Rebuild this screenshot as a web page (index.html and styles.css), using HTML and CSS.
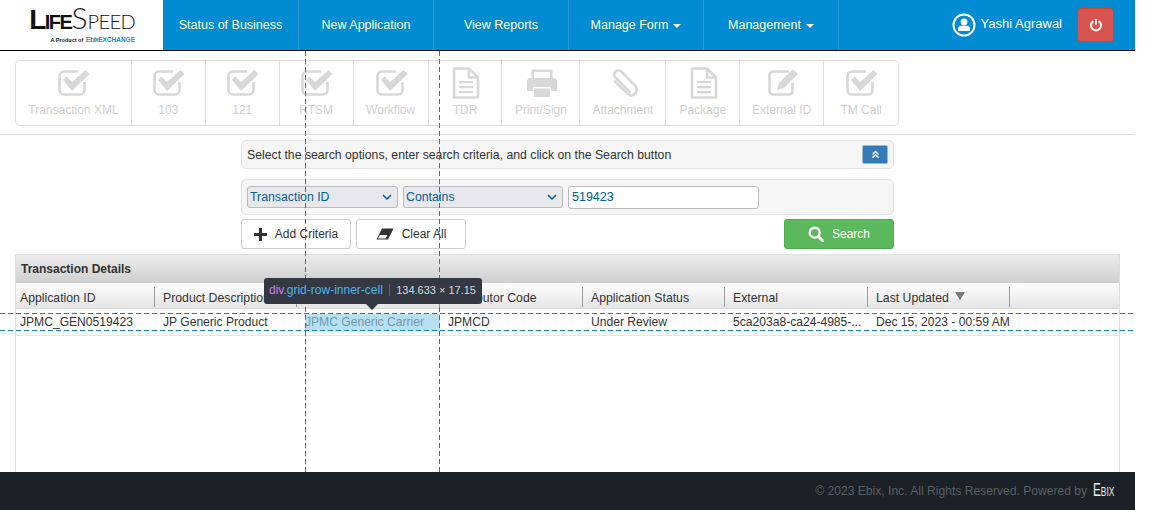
FILE: index.html
```html
<!DOCTYPE html>
<html lang="en">

<head>
    <meta charset="UTF-8">
    <title>LifeSpeed</title>
    <link rel="stylesheet" href="styles.css">
</head>

<body>
    <div class="page">
        <header class="topbar">
            <a class="logo">
                <span class="logo-name"><b class="cap">L</b><b class="rest">IFE</b><span class="cap">S</span><span class="rest">PEED</span></span>
                <span class="logo-sub">A Product of <i>Ebix</i><em>EXCHANGE</em></span>
            </a>
            <ul class="nav">
                <li class="first">Status of Business</li>
                <li>New Application</li>
                <li>View Reports</li>
                <li>Manage Form <span class="caret"></span></li>
                <li>Management <span class="caret"></span></li>
            </ul>
            <div class="user">
                <svg class="user-icon" width="24" height="24" viewBox="0 0 24 24">
                    <circle cx="12" cy="12" r="10.500" fill="none" stroke="#fff" stroke-width="2"></circle>
                    <circle cx="12" cy="9" r="3.400" fill="#fff"></circle>
                    <path d="M6 18v-2.200c0-1.800 1.400-3 3-3h6c1.600 0 3 1.200 3 3V18z" fill="#fff"></path>
                </svg>
                <span class="user-name">Yashi Agrawal</span>
                <button class="power">
                    <svg width="14" height="14" viewBox="0 0 14 14">
                        <path d="M4.300 3.200a5 5 0 1 0 5.400 0" fill="none" stroke="#fff" stroke-width="2"></path>
                        <path d="M7 1v5.500" stroke="#fff" stroke-width="2"></path>
                    </svg>
                </button>
            </div>
        </header>

        <div class="toolbar-wrap">
            <ul class="toolbar">
                <li class="w116"><svg class="ic"><use href="#check"></use></svg>Transaction XML</li>
                <li class="w74"><svg class="ic"><use href="#check"></use></svg>103</li>
                <li class="w74"><svg class="ic"><use href="#check"></use></svg>121</li>
                <li class="w74"><svg class="ic"><use href="#check"></use></svg>RTSM</li>
                <li class="w75"><svg class="ic"><use href="#check"></use></svg>Workflow</li>
                <li class="w74"><svg class="ic"><use href="#doc"></use></svg>TDR</li>
                <li class="w78"><svg class="ic"><use href="#printer"></use></svg>Print/Sign</li>
                <li class="w86"><svg class="ic"><use href="#clip"></use></svg>Attachment</li>
                <li class="w74"><svg class="ic"><use href="#doc"></use></svg>Package</li>
                <li class="w84"><svg class="ic"><use href="#edit"></use></svg>External ID</li>
                <li class="w74"><svg class="ic"><use href="#check"></use></svg>TM Call</li>
            </ul>
        </div>

        <section class="search">
            <div class="well hint">
                <span class="hint-text">Select the search options, enter search criteria, and click on the Search button</span>
                <button class="collapse">
                    <svg width="9" height="9" viewBox="0 0 10 10">
                        <path d="M1.500 5 5 1.800 8.500 5M1.500 8.600 5 5.400l3.500 3.200" fill="none" stroke="#dfe9f3" stroke-width="1.700"></path>
                    </svg>
                </button>
            </div>
            <div class="well criteria">
                <div class="select s-field">Transaction ID<svg class="chev" width="10" height="6" viewBox="0 0 10 6"><path d="M1 1l4 4 4-4" fill="none" stroke="#00629b" stroke-width="1.500"></path></svg></div>
                <div class="select s-op">Contains<svg class="chev" width="10" height="6" viewBox="0 0 10 6"><path d="M1 1l4 4 4-4" fill="none" stroke="#00629b" stroke-width="1.500"></path></svg></div>
                <div class="input">519423</div>
            </div>
            <div class="actions">
                <button class="btn add">
                    <svg width="13" height="13" viewBox="0 0 13 13"><path d="M5 0h3v5h5v3H8v5H5V8H0V5h5z" fill="#333"></path></svg>
                    Add Criteria
                </button>
                <button class="btn clear">
                    <svg width="18" height="12" viewBox="0 0 18 12">
                        <path d="M6 .5h11.500L12 11.500H.5z" fill="#333"></path>
                        <path d="M3.800 7h7.700l-2 3.500H2z" fill="#fff"></path>
                    </svg>
                    Clear All
                </button>
                <button class="btn go">
                    <svg width="16" height="16" viewBox="0 0 16 16">
                        <circle cx="6.700" cy="6.700" r="5" fill="none" stroke="#fff" stroke-width="2.400"></circle>
                        <path d="M10.500 10.500l4.200 4.200" stroke="#fff" stroke-width="2.800" stroke-linecap="round"></path>
                    </svg>
                    Search
                </button>
            </div>
        </section>

        <section class="details">
            <div class="details-title">Transaction Details</div>
            <div class="grid-head">
                <div class="col c1">Application ID</div>
                <div class="col c2">Product Description</div>
                <div class="col c3">Carrier</div>
                <div class="col c4">Distributor Code</div>
                <div class="col c5">Application Status</div>
                <div class="col c6">External</div>
                <div class="col c7">Last Updated <span class="sort"></span></div>
            </div>
            <div class="grid-row">
                <div class="cell c1">JPMC_GEN0519423</div>
                <div class="cell c2">JP Generic Product</div>
                <div class="cell c3"><span class="picked">JPMC Generic Carrier</span></div>
                <div class="cell c4">JPMCD</div>
                <div class="cell c5">Under Review</div>
                <div class="cell c6">5ca203a8-ca24-4985-...</div>
                <div class="cell c7">Dec 15, 2023 - 00:59 AM</div>
            </div>
        </section>

        <footer class="footer">
            <span class="copy">© 2023 Ebix, Inc. All Rights Reserved. Powered by</span>
            <span class="ebix">E<small>BIX</small></span>
        </footer>

        <!-- devtools inspect overlay -->
        <div class="guide v v1"></div>
        <div class="guide v v2"></div>
        <div class="guide h h1"></div>
        <div class="guide h h2"></div>
        <div class="tip">
            <span class="tip-tag">div</span><span class="tip-class">.grid-row-inner-cell</span>
            <span class="tip-size">134.633 × 17.15</span>
        </div>
    </div>

    <svg class="defs" width="0" height="0">
        <symbol id="check" viewBox="0 0 32 32">
            <path d="M20 4.500H6c-2.500 0-4.500 2-4.500 4.500v14c0 2.500 2 4.500 4.500 4.500h16c2.500 0 4.500-2 4.500-4.500v-8" fill="none" stroke="#d8d8d8" stroke-width="2.600"></path>
            <path d="M5 13l3.500-3.500 5.500 5.500L27.500 3l4 4-17.500 17z" fill="#d8d8d8"></path>
        </symbol>
        <symbol id="doc" viewBox="0 0 32 32">
            <path d="M4 1.500h15l9 9v20H4zM19 1.500v9h9" fill="none" stroke="#d8d8d8" stroke-width="2.600" stroke-linejoin="round"></path>
            <path d="M9 14h14v2.200H9zM9 19h14v2.200H9zM9 24h14v2.200H9z" fill="#d8d8d8"></path>
        </symbol>
        <symbol id="printer" viewBox="0 0 32 32">
            <path d="M5.500 12V2.500h21V12H24V5H8v7z" fill="#d8d8d8"></path>
            <path d="M4 11h24c1.500 0 3 1.500 3 3v10h-6v-4H7v4H1V14c0-1.500 1.500-3 3-3z" fill="#d8d8d8"></path>
            <path d="M8 21.500h16V30H8z" fill="#d8d8d8"></path>
        </symbol>
        <symbol id="clip" viewBox="0 0 32 32">
            <path d="M22 25 7.500 10.500c-2-2-1.500-4.500 0-6s4-1.800 6 .2l14 14.500c3 3 .5 9-4 9.300-1.500 0-3-.8-4-1.800L7 14.500" fill="none" stroke="#d8d8d8" stroke-width="2.600" stroke-linecap="round"></path>
        </symbol>
        <symbol id="edit" viewBox="0 0 32 32">
            <path d="M22 4.500H6.500C4 4.500 2.500 6 2.500 8.500v15c0 2.500 1.500 4 4 4h15c2.500 0 4-1.500 4-4v-8" fill="none" stroke="#d8d8d8" stroke-width="2.600"></path>
            <path d="M26 2l5 5-14 14-7 2 2-7z" fill="#d8d8d8"></path>
        </symbol>
    </svg>
</body>

</html>
```

FILE: styles.css
```css
* {
    box-sizing: border-box;
}

body,
ul,
li {
    margin: 0;
    padding: 0;
}

ul {
    list-style-type: none;
}

body {
    background: #fff;
    color: #333;
    font: 12px/17px "Liberation Sans", Arial, sans-serif;
}

button {
    font: inherit;
    cursor: pointer;
}

.page {
    position: relative;
    display: flex;
    flex-direction: column;
    width: 1135px;
    height: 510px;
    overflow: hidden;
}

.defs {
    position: absolute;
}

/* top bar */
.topbar {
    display: flex;
    flex: none;
    height: 51px;
    background: #008bd3;
    border-bottom: 1px solid #000;
}

.logo {
    display: flex;
    flex: none;
    flex-direction: column;
    align-items: flex-end;
    width: 163px;
    padding: 1px 28px 0 0;
    background: #fff;
}

.logo-name {
    color: #111;
    font-family: Lato, "Liberation Sans", sans-serif;
    line-height: 32px;
    white-space: nowrap;
}

.logo-name b {
    font-family: "Liberation Sans", sans-serif;
    font-weight: 700;
}

.logo-name .cap {
    font-size: 30px;
}

.logo-name b.cap {
    font-size: 28px;
    letter-spacing: -1.500px;
}

.logo-name b.rest {
    font-size: 20px;
    letter-spacing: -1.500px;
}

.logo-name span.cap {
    font-weight: 300;
}

.logo-name span.rest {
    font-size: 20px;
    font-weight: 300;
    letter-spacing: -.6px;
}

.logo-sub {
    margin-top: -6px;
    color: #222;
    font-size: 5.500px;
    font-weight: 700;
    line-height: 10px;
    white-space: nowrap;
}

.logo-sub i {
    margin-left: 1px;
    color: #0b5d8c;
    font-size: 8px;
    font-style: normal;
    font-weight: 400;
    letter-spacing: -.8px;
}

.logo-sub em {
    color: #1c8cc8;
    font-size: 6.500px;
    font-style: normal;
}

.nav {
    display: flex;
    color: #ffffc8;
    font-size: 12.500px;
}

.nav li {
    display: flex;
    gap: 5px;
    align-items: center;
    justify-content: center;
    width: 135px;
    border-right: 1px solid #2a9bd8;
}

.nav .first {
    width: 136px;
}

.nav .caret {
    width: 0;
    height: 0;
    margin-top: 2px;
    border-top: 4px solid #ffffc8;
    border-right: 4px solid transparent;
    border-left: 4px solid transparent;
}

.user {
    display: flex;
    flex: 1;
    align-items: center;
    justify-content: flex-end;
    padding-right: 21px;
    color: #fff;
}

.user-icon {
    margin-right: 5px;
}

.user-name {
    margin: -3px 15px 0 0;
    font-size: 13px;
}

.power {
    display: flex;
    align-items: center;
    justify-content: center;
    width: 37px;
    height: 34px;
    padding: 0;
    background: #d9534f;
    border: 1px solid #d43f3a;
    border-radius: 4px;
}

/* disabled toolbar */
.toolbar-wrap {
    flex: none;
    height: 84px;
    padding: 9px 0 0 15px;
    border-bottom: 1px solid #ddd;
}

.toolbar {
    display: flex;
    width: 884px;
    height: 66px;
    border: 1px solid #ddd;
    border-radius: 5px;
}

.toolbar li {
    display: flex;
    flex-direction: column;
    align-items: center;
    padding-top: 6px;
    color: #d0d0d0;
    border-right: 1px solid #ddd;
    white-space: nowrap;
}

.toolbar li:last-child {
    border-right: 0;
}

.toolbar .ic {
    width: 32px;
    height: 32px;
    margin: 0 0 3px 2px;
}

.w116 { width: 116px; }
.w74 { width: 74px; }
.w75 { width: 75px; }
.w78 { width: 78px; }
.w84 { width: 84px; }
.w86 { width: 86px; }

/* search form */
.search {
    flex: none;
    width: 653px;
    margin: 5px 0 0 241px;
}

.well {
    display: flex;
    align-items: center;
    background: #f5f5f5;
    border: 1px solid #e3e3e3;
    border-radius: 5px;
}

.hint {
    justify-content: space-between;
    height: 29px;
    padding: 0 5px;
}

.hint-text {
    margin-top: 1px;
    font-size: 12.250px;
}

.collapse {
    display: flex;
    align-items: center;
    justify-content: center;
    width: 26px;
    height: 19px;
    padding: 0;
    background: #337ab7;
    border: 1px solid #9fb6cc;
    border-radius: 2px;
}

.criteria {
    gap: 5px;
    height: 36px;
    margin-top: 10px;
    padding: 0 5px;
    color: #00629b;
    font-size: 12.300px;
}

.select {
    display: flex;
    align-items: center;
    justify-content: space-between;
    height: 22px;
    padding: 0 5px 0 2px;
    background: #e8e8ec;
    border: 1px solid #bbb;
    border-radius: 3px;
}

.s-field {
    width: 151px;
}

.s-op {
    width: 160px;
}

.input {
    width: 191px;
    height: 23px;
    padding: 2px 3px;
    font-size: 12.500px;
    background: #fff;
    border: 1px solid #bbb;
    border-radius: 3px;
}

.actions {
    display: flex;
    gap: 5px;
    margin-top: 4px;
}

.btn {
    display: flex;
    gap: 8px;
    align-items: center;
    justify-content: center;
    width: 110px;
    height: 30px;
    padding: 0;
    color: #333;
    background: #fff;
    border: 1px solid #ccc;
    border-radius: 3px;
}

.go {
    margin-left: auto;
    color: #fff;
    background: #5cb85c;
    border-color: #4cae4c;
}

/* results */
.details {
    flex: 1;
    width: 1105px;
    min-height: 0;
    margin: 5px 0 0 15px;
    border: 1px solid #ddd;
    border-bottom: 0;
}

.details-title {
    height: 28px;
    padding: 6px 5px 0;
    font-weight: 700;
    background: linear-gradient(#ececec, #cfcfcf);
}

.grid-head {
    display: flex;
    height: 26px;
    padding-top: 4px;
    font-size: 12.250px;
    background: linear-gradient(#fff, #e4e4e4);
    border-bottom: 1px solid #ddd;
}

.grid-row {
    display: flex;
    height: 27px;
    font-size: 12.100px;
    border-bottom: 1px solid #e5e5e5;
}

.col,
.cell {
    flex: none;
    padding-left: 8px;
    white-space: nowrap;
    overflow: hidden;
}

.col {
    height: 20px;
    padding-top: 3px;
    border-right: 1px solid #999;
}

.cell {
    padding-top: 5px;
}

.col.c1,
.cell.c1 {
    padding-left: 4px;
}

.c1 { width: 139px; }
.c2 { width: 142px; }
.c3 { width: 143px; }
.c4 { width: 143px; }
.c5 { width: 142px; }
.c6 { width: 143px; }
.c7 { width: 142px; }

.picked {
    display: inline-block;
    width: 135px;
    color: #6f98ad;
    background: #b8e0f2;
}

.sort {
    display: inline-block;
    width: 0;
    height: 0;
    margin: 0 0 5px 3px;
    border-top: 8px solid #777;
    border-right: 5px solid transparent;
    border-left: 5px solid transparent;
    vertical-align: middle;
}

.footer {
    display: flex;
    flex: none;
    gap: 6px;
    align-items: center;
    justify-content: flex-end;
    height: 38px;
    padding-right: 20px;
    color: #5a5f63;
    background: #1b2126;
}

.copy {
    font-size: 12.100px;
}

.ebix {
    width: 22px;
    color: #eee;
    font-size: 18px;
    white-space: nowrap;
    transform: scaleX(.65);
    transform-origin: left center;
}

.ebix small {
    font-size: 13px;
}

/* inspect overlay, sits over the page */
.guide {
    position: absolute;
}

.v {
    top: 51px;
    bottom: 38px;
    width: 1px;
    background: repeating-linear-gradient(#0a84c6 0 5px, transparent 5px 8px);
}

.v1 { left: 305px; }
.v2 { left: 439px; }

.h {
    left: 0;
    right: 2px;
    height: 1px;
    background: repeating-linear-gradient(90deg, #0a84c6 0 5px, transparent 5px 8px);
}

.h1 { top: 313px; }
.h2 { top: 330px; }

.tip {
    position: absolute;
    top: 278px;
    left: 264px;
    width: 218px;
    height: 26px;
    padding: 4px 5px;
    color: #d5d9df;
    background: #333842;
    border-radius: 3px;
    white-space: nowrap;
}

.tip::after {
    content: "";
    position: absolute;
    top: 26px;
    left: 102px;
    border-top: 6px solid #333842;
    border-right: 6px solid transparent;
    border-left: 6px solid transparent;
}

.tip-tag {
    color: #d57ee8;
}

.tip-class {
    color: #4db6e8;
}

.tip-size {
    margin-left: 3px;
    padding-left: 6px;
    font-size: 11px;
    border-left: 1px solid #666;
}
```
